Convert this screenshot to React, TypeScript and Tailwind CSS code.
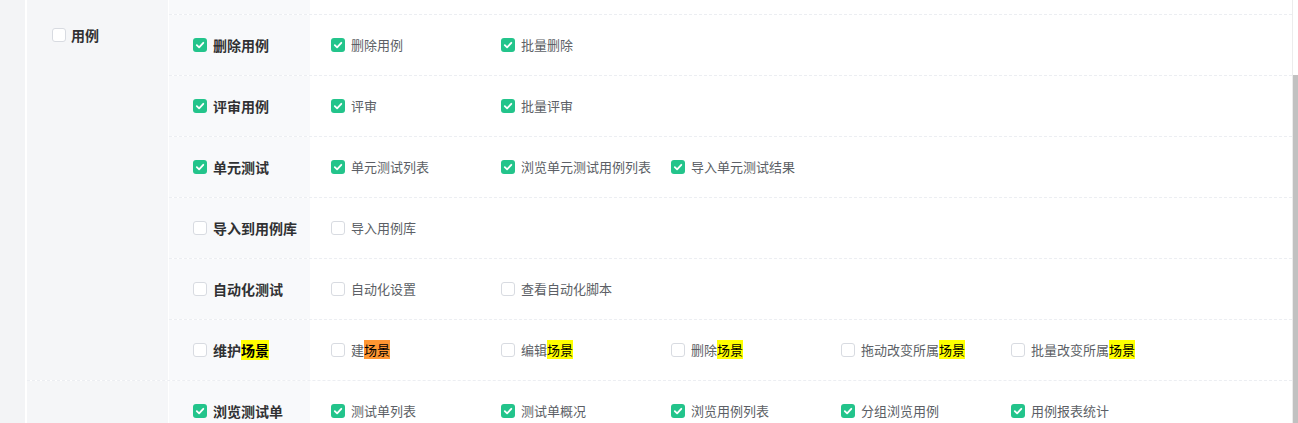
import React from "react";

type Seg = { t: string; hl?: "y" | "o" };
type Item = { label: Seg[]; checked: boolean };
type Row = { label: Seg[]; checked: boolean; items: Item[] };

const s = (t: string): Seg[] => [{ t }];

function Box({ checked }: { checked: boolean }) {
  if (checked) {
    return (
      <span className="w-[14px] h-[14px] rounded-[3px] bg-[#23c48b] flex items-center justify-center shrink-0">
        <svg width="10" height="10" viewBox="0 0 10 10">
          <path d="M1.8 5.2 L4.1 7.4 L8.3 2.8" fill="none" stroke="#ffffff" strokeWidth="1.8" strokeLinecap="round" strokeLinejoin="round" />
        </svg>
      </span>
    );
  }
  return <span className="w-[14px] h-[14px] rounded-[3px] bg-white border border-[#d8dbe1] shrink-0" />;
}

function Text({ segs, base }: { segs: Seg[]; base: string }) {
  return (
    <span className={base}>
      {segs.map((g, i) =>
        g.hl === "y" ? (
          <span key={i} className="bg-[#ffff00] text-black">{g.t}</span>
        ) : g.hl === "o" ? (
          <span key={i} className="bg-[#ff9632] text-black">{g.t}</span>
        ) : (
          <span key={i}>{g.t}</span>
        )
      )}
    </span>
  );
}

function PermRow({ row }: { row: Row }) {
  return (
    <div className="flex h-[60px]">
      <div className="w-[141px] bg-[#f8f9fb] flex items-center pl-[24px] gap-[6px]">
        <Box checked={row.checked} />
        <Text segs={row.label} base="text-[14px] font-bold text-[#303133] leading-[14px] whitespace-nowrap" />
      </div>
      <div className="flex-1 flex items-center pl-[21px]">
        {row.items.map((it, i) => (
          <div key={i} className="w-[170px] flex items-center gap-[6px]">
            <Box checked={it.checked} />
            <Text segs={it.label} base="text-[13px] text-[#5c5f66] leading-[14px] whitespace-nowrap" />
          </div>
        ))}
      </div>
    </div>
  );
}

const scene = (pre: string, hl: "y" | "o" = "y"): Seg[] => [{ t: pre }, { t: "场景", hl }];

const group1: Row[] = [
  { label: s("删除用例"), checked: true, items: [{ label: s("删除用例"), checked: true }, { label: s("批量删除"), checked: true }] },
  { label: s("评审用例"), checked: true, items: [{ label: s("评审"), checked: true }, { label: s("批量评审"), checked: true }] },
  {
    label: s("单元测试"),
    checked: true,
    items: [
      { label: s("单元测试列表"), checked: true },
      { label: s("浏览单元测试用例列表"), checked: true },
      { label: s("导入单元测试结果"), checked: true },
    ],
  },
  { label: s("导入到用例库"), checked: false, items: [{ label: s("导入用例库"), checked: false }] },
  { label: s("自动化测试"), checked: false, items: [{ label: s("自动化设置"), checked: false }, { label: s("查看自动化脚本"), checked: false }] },
  {
    label: scene("维护"),
    checked: false,
    items: [
      { label: scene("建", "o"), checked: false },
      { label: scene("编辑"), checked: false },
      { label: scene("删除"), checked: false },
      { label: scene("拖动改变所属"), checked: false },
      { label: scene("批量改变所属"), checked: false },
    ],
  },
];

const group2: Row[] = [
  {
    label: s("浏览测试单"),
    checked: true,
    items: [
      { label: s("测试单列表"), checked: true },
      { label: s("测试单概况"), checked: true },
      { label: s("浏览用例列表"), checked: true },
      { label: s("分组浏览用例"), checked: true },
      { label: s("用例报表统计"), checked: true },
    ],
  },
];

export default function App() {
  return (
    <div
      className="w-[1298px] h-[423px] overflow-hidden flex bg-white"
      style={{ fontFamily: '"Noto Sans CJK SC", "Noto Sans", sans-serif' }}
    >
      <div className="w-[25px] bg-[#f3f4f6] shrink-0" />
      <div className="w-[2px] bg-white shrink-0" />
      <div className="flex-1 flex flex-col">
        {/* group 1 */}
        <div className="flex">
          <div className="w-[141px] bg-[#f5f6f8] shrink-0">
            <div className="flex items-center gap-[5px] h-[14px] mt-[28px] ml-[25px]">
              <Box checked={false} />
              <span className="text-[14px] font-bold text-[#303133] leading-[14px]">用例</span>
            </div>
          </div>
          <div className="w-px bg-white shrink-0" />
          <div className="flex-1 flex flex-col">
            <div className="flex h-[14px]">
              <div className="w-[141px] bg-[#f8f9fb]" />
              <div className="flex-1" />
            </div>
            {group1.map((r, i) => (
              <div key={i} className="border-t border-dashed border-[#eceef2]">
                <PermRow row={r} />
              </div>
            ))}
          </div>
        </div>
        {/* group 2 */}
        <div className="flex border-t border-dashed border-[#eceef2]">
          <div className="w-[141px] bg-[#f5f6f8] shrink-0" />
          <div className="w-px bg-white shrink-0" />
          <div className="flex-1 flex flex-col">
            {group2.map((r, i) => (
              <PermRow key={i} row={r} />
            ))}
          </div>
        </div>
      </div>
      <div className="w-px bg-[#ececec] shrink-0" />
      <div className="w-[5px] flex flex-col shrink-0">
        <div className="h-[75px] bg-white" />
        <div className="flex-1 bg-[#c1c1c1]" />
      </div>
    </div>
  );
}
